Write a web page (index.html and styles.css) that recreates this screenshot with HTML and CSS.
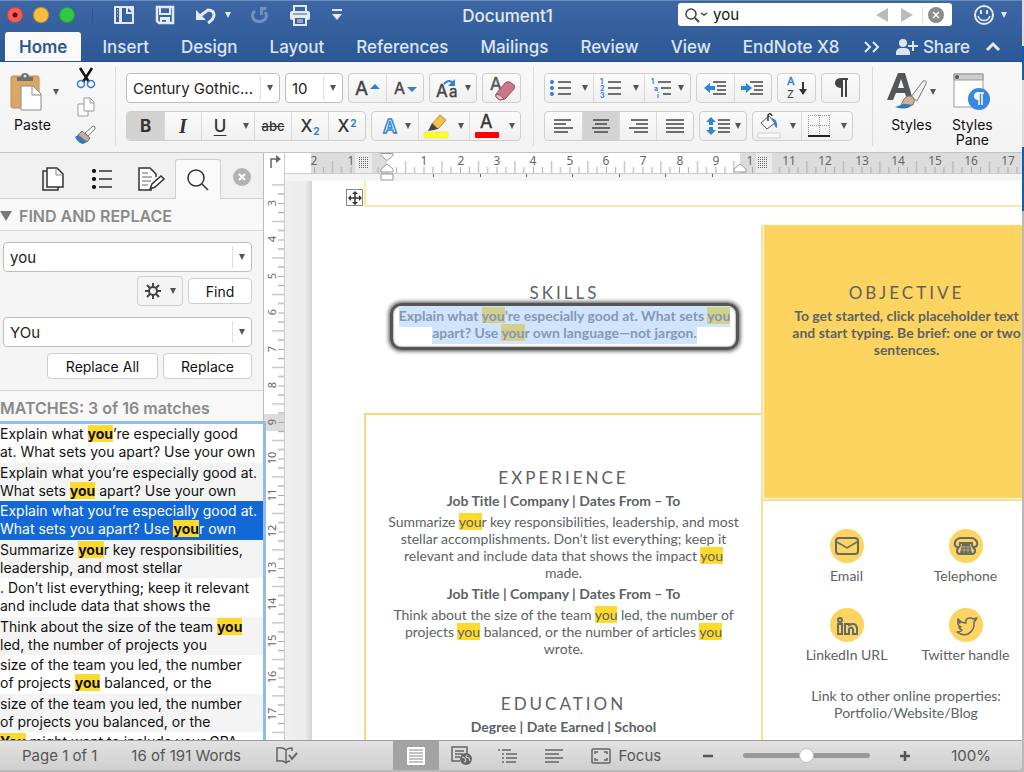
FILE: index.html
```
<!DOCTYPE html>
<html lang="en">
<head>
  <meta charset="UTF-8" />
  <meta name="viewport" content="width=device-width, initial-scale=1.0"/>
  <title>Document1</title>
  <link rel="stylesheet" href="styles.css">
</head>
<body>
<div class="window">

  <header class="chrome">
    <div class="titlebar">
      <div class="lights">
        <button class="light red" aria-label="Close"></button>
        <button class="light amber" aria-label="Minimize"></button>
        <button class="light green" aria-label="Zoom"></button>
      </div>
      <div class="quick">
        <button aria-label="Sidebar"><svg width="22" height="20" viewBox="0 0 22 20"><rect x="1" y="1" width="20" height="18" rx="1" fill="#e4eaf5"/><path d="M3 3h3v14H3z" fill="#3a619f"/><path d="M4 5h1M4 8h1M4 11h1" stroke="#e4eaf5"/><path d="M9 3h6l4 4v10H9z" fill="#3a619f"/><path d="M14 3v5h5" fill="none" stroke="#e4eaf5" stroke-width="2"/></svg></button>
        <button aria-label="Save"><svg width="20" height="20" viewBox="0 0 20 20"><path d="M2 2h16v16H4l-2-2z" fill="none" stroke="#e4eaf5" stroke-width="2.5"/><path d="M5 2v7h10V2M6 19v-6h8v6" fill="none" stroke="#e4eaf5" stroke-width="2"/><path d="M6 13h8v2H6zM11 13h3v6h-3z" fill="#e4eaf5"/></svg></button>
        <button aria-label="Undo" class="undo"><svg width="22" height="18" viewBox="0 0 22 18"><path d="M5 10l8-6q6 0 6 5c0 4-3 6-6 8" fill="none" stroke="#e4eaf5" stroke-width="3"/><path d="M1 4v10h10z" fill="#e4eaf5"/></svg><i class="caret light-caret"></i></button>
        <button aria-label="Repeat"><svg width="18" height="18" viewBox="0 0 18 18"><path d="M4 5a7 6 0 1 0 10 1" fill="none" stroke="#7391c0" stroke-width="3"/><path d="M9 1h7l-1 3h-3v5H9z" fill="#7391c0"/></svg></button>
        <button aria-label="Print"><svg width="22" height="22" viewBox="0 0 22 22"><path d="M5 7V2h12v5" fill="none" stroke="#e4eaf5" stroke-width="2"/><rect x="1" y="7" width="20" height="9" rx="2" fill="#e4eaf5"/><path d="M4 10h14" stroke="#3a619f"/><path d="M5 13h12v8H5z" fill="#3a619f" stroke="#e4eaf5" stroke-width="2"/><path d="M8 16h6M8 18h6" stroke="#e4eaf5"/></svg></button>
        <button aria-label="Customize"><svg width="12" height="12" viewBox="0 0 12 12"><path d="M1 1h10" stroke="#e4eaf5" stroke-width="2"/><path d="M1 5h10L6 11z" fill="#e4eaf5"/></svg></button>
      </div>
      <h1 class="doc-title">Document1</h1>
      <div class="search">
        <svg width="24" height="16" viewBox="0 0 24 16"><circle cx="7" cy="7" r="5" fill="none" stroke="#444" stroke-width="1.5"/><path d="M11 11l4 4" stroke="#444" stroke-width="2"/><path d="M17 6l3 2 3-2" fill="none" stroke="#444" stroke-width="1.5"/></svg>
        <input type="text" value="you" aria-label="Search in document">
        <button aria-label="Previous match"><svg width="12" height="14" viewBox="0 0 12 14"><path d="M12 0v14L0 7z" fill="#bbb"/></svg></button>
        <button aria-label="Next match"><svg width="12" height="14" viewBox="0 0 12 14"><path d="M0 0v14l12-7z" fill="#bbb"/></svg></button>
        <button aria-label="Clear search" class="clear"><svg width="16" height="16" viewBox="0 0 16 16"><circle cx="8" cy="8" r="8" fill="#8c8c8c"/><path d="M5 5l6 6M11 5l-6 6" stroke="#fff" stroke-width="1.5"/></svg></button>
      </div>
      <button class="feedback" aria-label="Feedback"><svg width="22" height="22" viewBox="0 0 22 22"><circle cx="11" cy="11" r="9" fill="none" stroke="#e4eaf5" stroke-width="2"/><path d="M8 6v4M14 6v4" stroke="#e4eaf5" stroke-width="2"/><path d="M5 12c2 6 10 6 12 0" fill="none" stroke="#e4eaf5" stroke-width="1.5"/></svg><i class="caret light-caret"></i></button>
    </div>
    <nav class="tabs">
      <a href="#" class="active">Home</a>
      <a href="#">Insert</a>
      <a href="#">Design</a>
      <a href="#">Layout</a>
      <a href="#">References</a>
      <a href="#">Mailings</a>
      <a href="#">Review</a>
      <a href="#">View</a>
      <a href="#">EndNote X8</a>
      <div class="tab-tools">
        <button aria-label="More tabs"><svg width="16" height="14" viewBox="0 0 16 14"><path d="M1 2l5 5-5 5M9 2l5 5-5 5" fill="none" stroke="#e4eaf5" stroke-width="2"/></svg></button>
        <button class="share"><svg width="22" height="16" viewBox="0 0 22 16"><circle cx="7" cy="4" r="4" fill="#dde5f2"/><path d="M0 16v-3q1-4 5-4h4q4 0 5 4v3z" fill="#dde5f2"/><path d="M17 2v10M12 7h10" stroke="#dde5f2" stroke-width="2"/></svg>Share</button>
        <button aria-label="Collapse ribbon"><svg width="14" height="9" viewBox="0 0 14 9"><path d="M1 8l6-6 6 6" fill="none" stroke="#e4eaf5" stroke-width="3"/></svg></button>
      </div>
    </nav>
  </header>

  <section class="ribbon">
    <div class="clipboard">
      <button class="big">
        <span class="pic"><svg width="32" height="40" viewBox="0 0 32 40"><rect x="1" y="4" width="28" height="32" rx="2" fill="#dba765" stroke="#c08c4c"/><path d="M7 9V5h4q0-4 4-4t4 4h4v4z" fill="#6d6f72"/><circle cx="15" cy="4" r="1.5" fill="#ddd"/><path d="M11 14h12l8 8v16H11z" fill="#fff" stroke="#8a8a8a"/><path d="M22 14v9h9" fill="none" stroke="#8a8a8a"/></svg><i class="caret"></i></span>
        <span class="label">Paste</span>
      </button>
      <div class="clip-tools">
        <button aria-label="Cut"><svg width="20" height="22" viewBox="0 0 20 22"><path d="M4 1l9 14M16 1L7 15" stroke="#111" stroke-width="2.5"/><circle cx="5" cy="17" r="3.5" fill="none" stroke="#2f7fd2" stroke-width="1.5"/><circle cx="15" cy="17" r="3.5" fill="none" stroke="#2f7fd2" stroke-width="1.5"/></svg></button>
        <button aria-label="Copy"><svg width="20" height="20" viewBox="0 0 20 20"><path d="M2 7h6l4 4v8H2z" fill="#fff" stroke="#999"/><path d="M8 1h6l4 4v9H8z" fill="#fff" stroke="#999"/><path d="M14 1v5h4" fill="none" stroke="#999"/></svg></button>
        <button aria-label="Format Painter"><svg width="22" height="20" viewBox="0 0 22 20"><path d="M10 8l8-7q3 0 2 3l-7 7z" fill="#f4f4f4" stroke="#777"/><path d="M7 6l8 7-3 4-9-7z" fill="#c9ac93" stroke="#777"/><path d="M3 10l9 7-4 2q-5-1-8-7z" fill="#3478bd"/></svg></button>
      </div>
    </div>

    <div class="group">
      <div class="row">
        <label class="combo font-name"><select aria-label="Font"><option>Century Gothic...</option></select></label>
        <label class="combo font-size"><select aria-label="Font size"><option>10</option></select></label>
        <div class="seg">
          <button class="w37" aria-label="Grow font"><svg width="28" height="20" viewBox="0 0 28 20"><text x="1" y="17" font-size="19" fill="#444" stroke="#444" stroke-width=".4">A</text><path d="M16 11h10l-5-5z" fill="#2f7fd2"/></svg></button>
          <button class="w37" aria-label="Shrink font"><svg width="28" height="20" viewBox="0 0 28 20"><text x="3" y="16" font-size="16" fill="#444" stroke="#444" stroke-width=".4">A</text><path d="M16 9h10l-5 5z" fill="#2f7fd2"/></svg></button>
        </div>
        <div class="seg">
          <button class="w46" aria-label="Change case"><svg width="24" height="22" viewBox="0 0 24 22"><text x="0" y="20" font-size="17" fill="#444" stroke="#444" stroke-width=".4">A</text><text x="13" y="20" font-size="15" fill="#444" stroke="#444" stroke-width=".4">a</text><path d="M8 7q5-6 10 0" fill="none" stroke="#2f7fd2" stroke-width="2"/><path d="M19 2v7h-7z" fill="#2f7fd2"/></svg><i class="caret"></i></button>
        </div>
        <div class="seg">
          <button class="w37" aria-label="Clear formatting"><svg width="28" height="26" viewBox="0 0 28 26"><text x="2" y="15" font-size="17" fill="#555" stroke="#555" stroke-width=".5">A</text><path d="M8 19l9-11q2-2 5-1l4 3q1 2 0 4l-9 10-5 1-4-3z" fill="#c87888" stroke="#985060"/><path d="M8 19q5 0 8 5l-4 1-4-3z" fill="#eac0c8" stroke="#985060"/></svg></button>
        </div>
      </div>
      <div class="row">
        <div class="seg">
          <button class="w37 on glyph" aria-pressed="true"><b>B</b></button>
          <button class="w37 glyph"><em>I</em></button>
          <button class="w37 glyph"><u>U</u></button>
          <button class="w16 split" aria-label="Underline style"><i class="caret"></i></button>
          <button class="w37 glyph small"><s>abc</s></button>
          <button class="w37 glyph">X<sub>2</sub></button>
          <button class="w37 glyph">X<sup>2</sup></button>
        </div>
        <div class="seg">
          <button class="w46" aria-label="Text effects"><svg width="20" height="20" viewBox="0 0 20 20"><text x="3" y="17" font-size="19" font-weight="600" fill="#fff" stroke="#2f86d8" stroke-width="1.5">A</text></svg><i class="caret"></i></button>
          <button class="w35" aria-label="Highlight"><svg width="24" height="26" viewBox="0 0 24 26"><path d="M8 11l8-9 6 5-8 9z" fill="#f3bf4e" stroke="#b98a2e"/><path d="M8 10l6 6-4 1-6 1z" fill="#444"/><rect x="0" y="19" width="24" height="6" rx="1" fill="#ffff29" stroke="#d8d820" stroke-width=".5"/></svg></button>
          <button class="w16 split" aria-label="Highlight color"><i class="caret"></i></button>
          <button class="w35" aria-label="Font color"><svg width="24" height="26" viewBox="0 0 24 26"><text x="5" y="15" font-size="18" fill="#333" stroke="#333" stroke-width=".4">A</text><rect x="0" y="19" width="24" height="6" rx="1" fill="#fb0007"/></svg></button>
          <button class="w16 split" aria-label="Font color list"><i class="caret"></i></button>
        </div>
      </div>
    </div>

    <div class="group">
      <div class="row">
        <div class="seg">
          <button class="w32" aria-label="Bullets"><svg width="22" height="18" viewBox="0 0 22 18"><circle cx="2" cy="3" r="2" fill="#2f7fd2"/><circle cx="2" cy="9" r="2" fill="#2f7fd2"/><circle cx="2" cy="15" r="2" fill="#2f7fd2"/><path d="M8 3h13M8 9h13M8 15h13" stroke="#444" stroke-width="1.5"/></svg></button>
          <button class="w16 split" aria-label="Bullet styles"><i class="caret"></i></button>
          <button class="w35" aria-label="Numbering"><svg width="22" height="20" viewBox="0 0 22 20"><g font-size="7" font-weight="700" fill="#2f7fd2"><text x="0" y="6">1</text><text x="0" y="13">2</text><text x="0" y="20">3</text></g><path d="M8 4h13M8 10h13M8 16h13" stroke="#444" stroke-width="1.5"/></svg></button>
          <button class="w16 split" aria-label="Number styles"><i class="caret"></i></button>
          <button class="w46" aria-label="Multilevel list"><svg width="22" height="20" viewBox="0 0 22 20"><g font-size="7" font-weight="700" fill="#2f7fd2"><text x="0" y="6">1</text><text x="3" y="13">a</text><text x="6" y="20">i</text></g><path d="M7 4h13M10 10h10M12 16h8" stroke="#444" stroke-width="1.5"/></svg><i class="caret"></i></button>
        </div>
        <div class="seg">
          <button class="w37" aria-label="Decrease indent"><svg width="24" height="16" viewBox="0 0 24 16"><path d="M0 8l6-5v3h5v4H6v3z" fill="#2f86d8"/><path d="M9 2h13M13 6h9M13 10h9M9 14h13" stroke="#444" stroke-width="1.5"/></svg></button>
          <button class="w37" aria-label="Increase indent"><svg width="24" height="16" viewBox="0 0 24 16"><path d="M11 8L5 3v3H0v4h5v3z" fill="#2f86d8"/><path d="M9 2h13M13 6h9M13 10h9M9 14h13" stroke="#444" stroke-width="1.5"/></svg></button>
        </div>
        <div class="seg">
          <button class="w37" aria-label="Sort"><svg width="24" height="24" viewBox="0 0 24 24"><text x="2" y="9" font-size="11" fill="#2f7fd2" stroke="#2f7fd2" stroke-width=".4">A</text><text x="2" y="22" font-size="11" fill="#444">Z</text><path d="M18 6v9" stroke="#333" stroke-width="2"/><path d="M14 13l4 6 4-6z" fill="#333"/></svg></button>
        </div>
        <div class="seg">
          <button class="w37" aria-label="Show formatting marks"><svg width="16" height="20" viewBox="0 0 16 20"><path d="M8 1h7M9 1v18M13 1v18" stroke="#444" stroke-width="2"/><path d="M9 0q-7 0-7 5t7 5z" fill="#444"/></svg></button>
        </div>
      </div>
      <div class="row">
        <div class="seg">
          <button class="w37" aria-label="Align left"><svg width="20" height="14" viewBox="0 0 20 14"><path d="M0 1h17M0 5h12M0 9h19M0 13h14" stroke="#444" stroke-width="1.5"/></svg></button>
          <button class="w37 on" aria-label="Center" aria-pressed="true"><svg width="20" height="14" viewBox="0 0 20 14"><path d="M2 1h16M4 5h12M1 9h18M3 13h14" stroke="#444" stroke-width="1.5"/></svg></button>
          <button class="w37" aria-label="Align right"><svg width="20" height="14" viewBox="0 0 20 14"><path d="M3 1h17M8 5h12M1 9h19M6 13h14" stroke="#444" stroke-width="1.5"/></svg></button>
          <button class="w37" aria-label="Justify"><svg width="20" height="14" viewBox="0 0 20 14"><path d="M1 1h18M1 5h18M1 9h18M1 13h18" stroke="#444" stroke-width="1.5"/></svg></button>
        </div>
        <div class="seg">
          <button class="w46" aria-label="Line spacing"><svg width="24" height="20" viewBox="0 0 24 20"><path d="M0 6l5-5 5 5H7v3H3V6zM0 14l5 5 5-5H7v-3H3v3z" fill="#2f86d8"/><path d="M12 4h12M12 8h12M12 12h12M12 16h12" stroke="#444" stroke-width="1.5"/></svg><i class="caret"></i></button>
        </div>
        <div class="seg">
          <button class="w32" aria-label="Shading"><svg width="24" height="26" viewBox="0 0 24 26"><path d="M4 10l8-7 6 7-8 6z" fill="#fff" stroke="#555"/><path d="M11 8V2q2-3 4 1" fill="none" stroke="#333" stroke-width="1.5"/><path d="M14 5q7 0 6 10-3-1-3-6z" fill="#2f86d8"/><rect x="1" y="20" width="22" height="5" rx="1" fill="#fafafa" stroke="#ccc"/></svg></button>
          <button class="w16 split" aria-label="Shading color"><i class="caret"></i></button>
          <button class="w35" aria-label="Borders"><svg width="22" height="22" viewBox="0 0 22 22"><path d="M0 .5h22M.5 0v20M21.5 0v20M11.5 0v20M0 10.5h22" fill="none" stroke="#999" stroke-dasharray="1 1"/><path d="M0 21h22" stroke="#222" stroke-width="2"/></svg></button>
          <button class="w16 split" aria-label="Border styles"><i class="caret"></i></button>
        </div>
      </div>
    </div>

    <div class="styles-group">
      <button class="big">
        <span class="pic"><svg width="40" height="40" viewBox="0 0 40 40"><path d="M0 28L11 1h7l8 27h-6l-2-7H9l-3 7zM11 16h6L14 7z" fill="#55565a"/><path d="M24 25L36 9q4-1 3 3L30 29z" fill="#f2f2f2" stroke="#777"/><path d="M17 27q4-5 9-2 3 3 0 8H14z" fill="#cdb299" stroke="#777"/><path d="M8 35l9-3 8 1q-5 6-17 2z" fill="#2f78bd"/></svg><i class="caret"></i></span>
        Styles
      </button>
      <button class="big pane">
        <span class="pic"><svg width="38" height="40" viewBox="0 0 38 40"><rect x="1" y="2" width="29" height="33" fill="#fff" stroke="#999"/><path d="M1 2h29v6H1z" fill="#ccc" stroke="#999"/><circle cx="4" cy="5" r="2" fill="#555"/><circle cx="26" cy="27" r="11" fill="#3589e0"/><path d="M25 21h6M26 21v12M29 21v12" stroke="#fff" stroke-width="1.5"/><path d="M26 20q-5 0-5 4t5 4z" fill="#fff"/></svg></span>
        Styles<br>Pane
      </button>
    </div>
  </section>

  <main class="workspace">
    <aside class="sidebar">
      <div class="side-tabs">
        <button aria-label="Thumbnails"><svg width="24" height="26" viewBox="0 0 24 26"><path d="M6 5H2v19h15v-3" fill="none" stroke="#333" stroke-width="1.5"/><path d="M6 2h10l6 6v13H6z" fill="#fff" stroke="#333" stroke-width="1.5"/><path d="M15 2v7h7" fill="none" stroke="#888"/></svg></button>
        <button aria-label="Document map"><svg width="22" height="20" viewBox="0 0 22 20"><circle cx="3" cy="2" r="2"/><circle cx="3" cy="10" r="2"/><circle cx="3" cy="18" r="2"/><path d="M8 2h13M8 10h13M8 18h13" stroke="#333" stroke-width="1.5"/></svg></button>
        <button aria-label="Reviewing"><svg width="28" height="26" viewBox="0 0 28 26"><path d="M15 24H2V2h11l6 6v3" fill="#fff" stroke="#333" stroke-width="1.5"/><path d="M5 7h6M5 11h10M5 15h9M5 19h6" stroke="#999" stroke-width="1.5"/><path d="M13 23l2-5 9-8 3 3-9 8z" fill="#fff" stroke="#333" stroke-width="1.5"/></svg></button>
        <button aria-label="Find" class="active"><svg width="22" height="22" viewBox="0 0 22 22"><circle cx="9" cy="9" r="8" fill="none" stroke="#333" stroke-width="1.5"/><path d="M15 15l6 6" stroke="#333" stroke-width="1.5"/></svg></button>
        <button aria-label="Close sidebar"><svg width="18" height="18" viewBox="0 0 18 18"><circle cx="9" cy="9" r="9" fill="#b3b3b3"/><path d="M6 6l6 6M12 6l-6 6" stroke="#fff" stroke-width="2"/></svg></button>
      </div>
      <h2 class="side-head"><svg width="12" height="12" viewBox="0 0 12 12"><path d="M0 1h12L6 11z" fill="#777"/></svg>FIND AND REPLACE</h2>
      <form class="find-form">
        <label class="combo"><select aria-label="Find text"><option>you</option></select></label>
        <div class="actions">
          <button type="button" class="gear" aria-label="Options"><svg width="16" height="16" viewBox="0 0 16 16"><path d="M8 0v16M0 8h16M2 2l12 12M14 2L2 14" stroke="#444" stroke-width="2"/><circle cx="8" cy="8" r="4" fill="#f4f4f4" stroke="#444" stroke-width="2"/></svg><i class="caret"></i></button>
          <button type="button" class="push find">Find</button>
        </div>
        <label class="combo"><select aria-label="Replace with"><option>YOu</option></select></label>
        <div class="actions">
          <button type="button" class="push all">Replace All</button>
          <button type="button" class="push one">Replace</button>
        </div>
      </form>
      <h2 class="side-head matches-head">MATCHES: 3 of 16 matches</h2>
      <ul class="matches">
        <li>Explain what <mark>you</mark>’re especially good<br>at. What sets you apart? Use your own</li>
        <li>Explain what you’re especially good at.<br>What sets <mark>you</mark> apart? Use your own</li>
        <li class="selected">Explain what you’re especially good at.<br>What sets you apart? Use <mark>you</mark>r own</li>
        <li>Summarize <mark>you</mark>r key responsibilities,<br>leadership, and most stellar</li>
        <li>. Don’t list everything; keep it relevant<br>and include data that shows the</li>
        <li>Think about the size of the team <mark>you</mark><br>led, the number of projects you</li>
        <li>size of the team you led, the number<br>of projects <mark>you</mark> balanced, or the</li>
        <li>size of the team you led, the number<br>of projects you balanced, or the</li>
        <li><mark>You</mark> might want to include your GPA</li>
      </ul>
    </aside>

    <div class="ruler-v">
      <svg width="21" height="20" viewBox="0 0 21 20"><path d="M7 15V6h6" fill="none" stroke="#666" stroke-width="1.5"/><path d="M12 2l5 4-5 4z" fill="#666"/></svg>
      <svg class="scale" width="21" height="567" viewBox="0 173 21 567">
        <defs><pattern id="vt" x="0" y="203" width="21" height="36.5" patternUnits="userSpaceOnUse"><path d="M14 0.5h6M14 9.5h6M8 18.5h12M14 27.5h6" stroke="#aaa"/></pattern></defs>
        <path d="M0 414h20v17H0z" fill="#dcdcdc"/>
        <path d="M0 181h20v559H0z" fill="url(#vt)"/>
        <g class="nums">
          <text transform="translate(12 203) rotate(-90)">3</text><text transform="translate(12 239) rotate(-90)">4</text><text transform="translate(12 276) rotate(-90)">5</text><text transform="translate(12 312) rotate(-90)">6</text><text transform="translate(12 349) rotate(-90)">7</text><text transform="translate(12 385) rotate(-90)">8</text><text transform="translate(12 422) rotate(-90)">9</text><text transform="translate(12 458) rotate(-90)">10</text><text transform="translate(12 495) rotate(-90)">11</text><text transform="translate(12 531) rotate(-90)">12</text><text transform="translate(12 568) rotate(-90)">13</text><text transform="translate(12 604) rotate(-90)">14</text><text transform="translate(12 641) rotate(-90)">15</text><text transform="translate(12 677) rotate(-90)">16</text><text transform="translate(12 714) rotate(-90)">17</text>
        </g>
      </svg>
    </div>

    <div class="editor">
      <div class="ruler-h">
        <svg width="740" height="28" viewBox="285 153 740 28">
          <defs><pattern id="ht" x="387" y="153" width="36.5" height="20" patternUnits="userSpaceOnUse"><path d="M0.5 14v6M9.5 14v6M18.5 8v12M27.5 14v6" stroke="#aaa"/></pattern></defs>
          <path d="M285 153h740v20H285z" fill="#fff"/>
          <path d="M311 153h76v20h-76zM740 153h285v20H740z" fill="#dcdcdc"/>
          <path d="M312 153h713v20H312z" fill="url(#ht)"/>
          <path d="M285 173h740v8H285z" fill="#f4f4f4"/><path d="M285 173.5h740" stroke="#ccc"/>
          <path d="M355 153h17v20h-17zM756 153h16v20h-16z" fill="#ececec"/>
          <path d="M359.5 157v12M361.5 157v12M363.5 157v12M365.5 157v12M367.5 157v12M758.5 157v12M760.5 157v12M762.5 157v12M764.5 157v12M766.5 157v12" stroke="#666" stroke-dasharray="1 1"/>
          <path d="M433.5 174v3M480.5 174v3M526.5 174v3M572.5 174v3M619.5 174v3M665.5 174v3M712.5 174v3" stroke="#666"/>
          <path d="M381 153.5h12v2l-6 5-6-5zM381 172v-3l6-5 6 5v3zM381 174h12v6h-12zM734 172v-3l6-5 6 5v3z" fill="#fff" stroke="#999"/>
          <g class="nums">
            <text x="314" y="165">2</text><text x="351" y="165">1</text><text x="424" y="165">1</text><text x="461" y="165">2</text><text x="497" y="165">3</text><text x="533" y="165">4</text><text x="570" y="165">5</text><text x="606" y="165">6</text><text x="643" y="165">7</text><text x="680" y="165">8</text><text x="716" y="165">9</text><text x="750" y="165">1</text><text x="789" y="165">11</text><text x="825" y="165">12</text><text x="862" y="165">13</text><text x="898" y="165">14</text><text x="935" y="165">15</text><text x="971" y="165">16</text><text x="1008" y="165">17</text>
          </g>
        </svg>
      </div>
      <div class="canvas">
        <article class="page">
          <button class="handle" aria-label="Move table"><svg width="14" height="14" viewBox="0 0 14 14"><path d="M7 2v10M2 7h10" stroke="#333" stroke-width="1.5"/><path d="M7 0l3 3H4zM7 14l3-3H4zM0 7l3-3v6zM14 7l-3-3v6z" fill="#333"/></svg></button>
          <div class="banner"></div>
          <div class="columns">
            <div class="col-main">
              <section class="skills">
                <h3>SKILLS</h3>
                <p class="callout"><span>Explain what <mark>you</mark>’re especially good at. What sets <mark>you</mark></span><br><span>apart? Use <mark>you</mark>r own language—not jargon.</span></p>
              </section>
              <section class="experience">
                <h3>EXPERIENCE</h3>
                <h4>Job Title | Company | Dates From – To</h4>
                <p>Summarize <mark>you</mark>r key responsibilities, leadership, and most<br>stellar accomplishments. Don’t list everything; keep it<br>relevant and include data that shows the impact <mark>you</mark><br>made.</p>
                <h4>Job Title | Company | Dates From – To</h4>
                <p>Think about the size of the team <mark>you</mark> led, the number of<br>projects <mark>you</mark> balanced, or the number of articles <mark>you</mark><br>wrote.</p>
                <h3 class="next">EDUCATION</h3>
                <h4>Degree | Date Earned | School</h4>
              </section>
            </div>
            <div class="col-side">
              <section class="objective">
                <h3>OBJECTIVE</h3>
                <p>To get started, click placeholder text<br>and start typing. Be brief: one or two<br>sentences.</p>
              </section>
              <section class="contacts">
                <div class="contact"><svg width="34" height="34" viewBox="0 0 34 34"><circle cx="17" cy="17" r="17" fill="#fdd45f"/><rect x="6" y="9" width="22" height="16" rx="3" fill="none" stroke="#636a6b" stroke-width="2"/><path d="M7 13l10 6 10-6" fill="none" stroke="#636a6b" stroke-width="1.5"/></svg>Email</div>
                <div class="contact"><svg width="34" height="34" viewBox="0 0 34 34"><circle cx="17" cy="17" r="17" fill="#fdd45f"/><path d="M10 18H8q-3-1-2-5 2-4 6-4h10q4 0 6 4 1 4-2 5h-2q-1 0-1-4H11q0 4-1 4zM10 18q-2 2-2 4 0 3 3 3h12q3 0 3-3 0-2-2-4" fill="none" stroke="#636a6b" stroke-width="2"/><path d="M13 15h8l2 9H11z" fill="#636a6b"/><path d="M12 18h10M12 21h10M15 17v7M19 17v7" stroke="#fdd45f" stroke-width=".5"/></svg>Telephone</div>
                <div class="contact"><svg width="34" height="34" viewBox="0 0 34 34"><circle cx="17" cy="17" r="17" fill="#fdd45f"/><circle cx="10" cy="12" r="2" fill="none" stroke="#636a6b" stroke-width="2"/><path d="M8 16h4v10H8zM15 16h4v1q7-3 8 3v6h-4v-5q-2-3-4 0v5h-4z" fill="none" stroke="#636a6b" stroke-width="2"/></svg>LinkedIn URL</div>
                <div class="contact"><svg width="34" height="34" viewBox="0 0 34 34"><circle cx="17" cy="17" r="17" fill="#fdd45f"/><path d="M9 11q3 4 8 4-1-5 4-5 2 0 3 1l4-1-3 4q1 8-6 12-6 2-11-2 4 0 5-2-3-1-3-3h2q-4-2-3-5l2 1q-3-2-2-4z" fill="none" stroke="#636a6b" stroke-width="1.5" stroke-linejoin="round"/></svg>Twitter handle</div>
              </section>
              <p class="links">Link to other online properties:<br>Portfolio/Website/Blog</p>
            </div>
          </div>
        </article>
      </div>
    </div>
  </main>

  <footer class="status">
    <span class="pages">Page 1 of 1</span>
    <span class="words">16 of 191 Words</span>
    <button class="proof" aria-label="Proofing"><svg width="22" height="18" viewBox="0 0 22 18"><path d="M10 3Q7 0 1 1v13q6-1 9 2 2-2 4-2M10 3v13M10 3q2-2 6-2v3" fill="none" stroke="#666" stroke-width="1.5"/><path d="M13 8l3 4 5-6" fill="none" stroke="#666" stroke-width="2"/></svg></button>
    <div class="views">
      <button class="on" aria-label="Print layout"><svg width="20" height="18" viewBox="0 0 20 18"><rect x="1" y="0" width="18" height="18" rx="1" fill="#fff"/><path d="M3 3h14M3 6h14M3 9h14M3 12h14M3 15h14" stroke="#888"/></svg></button>
      <button aria-label="Web layout"><svg width="22" height="20" viewBox="0 0 22 20"><path d="M9 15H1V1h15v7" fill="none" stroke="#666" stroke-width="1.5"/><path d="M4 5h9M4 8h8M4 11h5" stroke="#666" stroke-width="1.5"/><circle cx="15" cy="13" r="6" fill="#666"/><path d="M11 11l3 1 1 3-2 1M16 9l-1 2 3 1 1 3" fill="none" stroke="#ddd"/></svg></button>
      <button aria-label="Outline"><svg width="20" height="14" viewBox="0 0 20 14"><path d="M0 1h2M4 1h9M4 5h2M8 5h11M4 9h2M8 9h11M4 13h2M8 13h10" stroke="#666" stroke-width="1.5"/></svg></button>
      <button aria-label="Draft"><svg width="18" height="14" viewBox="0 0 18 14"><path d="M0 1h18M0 5h14M0 9h18M0 13h14" stroke="#666" stroke-width="1.5"/></svg></button>
    </div>
    <button class="focus"><svg width="20" height="16" viewBox="0 0 20 16"><rect x="1" y="1" width="18" height="14" rx="1" fill="none" stroke="#666" stroke-width="1.5"/><path d="M4 6V4h3M13 4h3v2M16 10v2h-3M7 12H4v-2" fill="none" stroke="#666" stroke-width="1.5"/></svg>Focus</button>
    <div class="zoom">
      <button aria-label="Zoom out"><svg width="12" height="12" viewBox="0 0 12 12"><path d="M1 6h10" stroke="#555" stroke-width="2.5"/></svg></button>
      <input type="range" min="0" max="100" value="50" aria-label="Zoom">
      <button aria-label="Zoom in"><svg width="12" height="12" viewBox="0 0 12 12"><path d="M1 6h10M6 1v10" stroke="#555" stroke-width="2.5"/></svg></button>
      <span>100%</span>
    </div>
  </footer>
</div>
</body>
</html>
```
FILE: styles.css
```
* {
  box-sizing: border-box;
}

body {
  margin: 0;
  height: 100vh;
  overflow: hidden;
  font-family: Inter, "Liberation Sans", sans-serif;
  font-size: 14px;
  color: #111;
  padding: 0 2px 2px 0;
  background: linear-gradient(#dcdcdc 46px, #1160ae 46px, #1160ae 80px, #dcdcdc 80px, #dcdcdc 147px, #1160ae 147px, #1160ae 211px, #b9b9b9 211px);
}

h1, h2, h3, h4, p, ul {
  margin: 0;
  padding: 0;
  font-weight: normal;
}

button, input, select {
  font: inherit;
  color: inherit;
  border: 0;
  padding: 0;
  margin: 0;
  background: none;
}

button {
  display: flex;
  align-items: center;
  justify-content: center;
}

svg {
  display: block;
  flex: none;
  overflow: visible;
}

svg text {
  font-family: Inter, sans-serif;
}

.window {
  height: 100%;
  display: flex;
  flex-direction: column;
  background: #f5f5f5;
  overflow: hidden;
  border-radius: 0 0 5px 0;
}

/* small down arrow used by every menu button */
.caret {
  flex: none;
  border: 3px solid transparent;
  border-top: 6px solid #555;
  border-bottom: 0;
}

.light-caret {
  border-top-color: #e4eaf5;
}

/* ---- title bar and tabs ---- */
.chrome {
  flex: none;
  background: linear-gradient(#3d66a4, #2c5896);
  border-top: 1px solid #6b8bbb;
  border-bottom: 1px solid #24508f;
  color: #e4eaf5;
}

.titlebar {
  height: 31px;
  display: flex;
  align-items: center;
  padding: 0 15px 4px 7px;
}

.lights {
  display: flex;
  gap: 10px;
  padding-right: 17px;
  border-right: 1px solid #31578f;
}

.light {
  width: 16px;
  height: 16px;
  border-radius: 50%;
  border: 1px solid #0003;
}

.red {
  background: radial-gradient(#5b0b0b 2px, #fc5b57 3px);
}

.amber {
  background: #fdbc40;
}

.green {
  background: #33c748;
}

.quick {
  display: flex;
  align-items: center;
  gap: 20px;
  margin-left: 20px;
}

.undo {
  gap: 8px;
}

.doc-title {
  flex: 1;
  text-align: center;
  font-size: 17px;
  font-weight: 500;
  padding: 3px 6px 0 0;
}

.search {
  width: 274px;
  height: 23px;
  display: flex;
  align-items: center;
  gap: 13px;
  padding: 0 8px 0 6px;
  border-radius: 3px;
  background: #fff;
  color: #111;
}

.search input {
  flex: 1;
  width: 0;
  font-size: 15px;
  margin-left: -8px;
}

.search .clear {
  padding-left: 5px;
  border-left: 1px solid #ddd;
  margin-left: -4px;
}

.feedback {
  gap: 6px;
  margin-left: 21px;
}

.tabs {
  height: 29px;
  display: flex;
  align-items: stretch;
  padding-left: 5px;
}

.tabs a {
  display: flex;
  align-items: center;
  padding: 0 16px;
  font-size: 17px;
  font-weight: 500;
  color: #dde5f2;
  text-decoration: none;
  white-space: nowrap;
}

.tabs a.active {
  background: #fafafa;
  color: #2b5797;
  font-weight: 600;
  padding: 0 14px;
  border-radius: 3px 3px 0 0;
  margin-right: 5px;
}

.tab-tools {
  flex: 1;
  display: flex;
  align-items: center;
  justify-content: flex-end;
  gap: 16px;
  padding-right: 22px;
  font-size: 17px;
  font-weight: 500;
}

.share {
  gap: 5px;
  color: #dde5f2;
}

/* ---- ribbon ---- */
.ribbon {
  flex: none;
  height: 91px;
  display: flex;
  padding-top: 5px;
  border-bottom: 1px solid #c4c4c4;
  background: linear-gradient(#f8f8f8, #f3f3f3);
}

.clipboard {
  width: 115px;
  display: flex;
  gap: 16px;
  padding-left: 10px;
}

.big {
  flex-direction: column;
  justify-content: flex-start;
  font-size: 14px;
  line-height: 15px;
  align-self: flex-start;
  padding-top: 4px;
}

.big .pic {
  display: flex;
  align-items: center;
  gap: 3px;
  height: 42px;
  margin-bottom: 4px;
}

.clipboard .pic {
  gap: 11px;
}

.clipboard .big {
  align-items: flex-start;
}

.clipboard .label {
  padding-left: 4px;
}

.clip-tools {
  display: flex;
  flex-direction: column;
  align-items: center;
  gap: 8px;
}

.group {
  display: flex;
  flex-direction: column;
  gap: 8px;
  padding: 6px 12px 0 10px;
}

.group, .styles-group {
  border-left: 1px solid #dcdcdc;
  margin-bottom: 6px;
}

.row {
  display: flex;
  gap: 5px;
}

.seg {
  display: flex;
  height: 30px;
  border: 1px solid #cfcfcf;
  border-radius: 4px;
  background: linear-gradient(#fbfbfb, #f0f0f0);
  overflow: hidden;
}

.seg button {
  border-left: 1px solid #d9d9d9;
  gap: 5px;
}

.seg button:first-child, .seg button.split {
  border-left: 0;
}

.seg button.on {
  background: #d3d3d3;
}

.w16 { width: 16px; }
.w32 { width: 32px; }
.w35 { width: 35px; }
.w37 { width: 37px; }
.w46 { width: 46px; }

.seg .glyph {
  gap: 1px;
  font-size: 17px;
  font-weight: 500;
  color: #333;
}

.glyph em {
  font-family: "Liberation Serif", serif;
  font-size: 20px;
  font-weight: bold;
}

.glyph u {
  text-underline-offset: 3px;
}

.seg .small {
  font-size: 13px;
}

.glyph sub, .glyph sup {
  font-size: 10px;
  font-weight: 700;
  line-height: 10px;
  color: #2f7fd2;
}

.glyph sub {
  align-self: flex-end;
  margin-bottom: 4px;
}

.glyph sup {
  align-self: flex-start;
  margin-top: 6px;
}

/* select and its arrow share one grid cell */
.combo {
  display: grid;
  align-items: center;
  height: 30px;
  border: 1px solid #bdbdbd;
  border-radius: 4px;
  background: #fff;
}

.combo select {
  grid-area: 1 / 1;
  appearance: none;
  width: 100%;
  height: 100%;
  padding: 0 18px 0 6px;
  font-size: 15px;
  color: #222;
}

.combo::after {
  content: "";
  grid-area: 1 / 1;
  justify-self: end;
  margin-right: 6px;
  border: 3px solid transparent;
  border-top: 6px solid #555;
  border-bottom: 0;
  pointer-events: none;
}

.combo::before {
  content: "";
  grid-area: 1 / 1;
  justify-self: end;
  width: 1px;
  height: 22px;
  margin-right: 18px;
  background: #ddd;
  z-index: 1;
}

.font-name {
  width: 154px;
}

.font-size {
  width: 58px;
}

.styles-group {
  flex: 1;
  display: flex;
  gap: 16px;
  padding-left: 14px;
}

.styles-group .big {
  align-items: center;
}

/* ---- workspace ---- */
.workspace {
  flex: 1;
  min-height: 0;
  display: flex;
  overflow: hidden;
}

.sidebar {
  width: 264px;
  flex: none;
  z-index: 1;
  border-right: 1px solid #bdbdbd;
  background: #f5f5f5;
}

.side-tabs {
  height: 46px;
  display: flex;
  align-items: flex-end;
  padding-left: 28px;
  background: #f0f0f0;
  box-shadow: inset 0 -1px #d0d0d0;
}

.side-tabs button {
  width: 49px;
  height: 40px;
}

.side-tabs .active {
  width: 46px;
  border: 1px solid #cfcfcf;
  border-bottom: 0;
  border-radius: 3px 3px 0 0;
  background: #fafafa;
}

.side-tabs button:last-child {
  width: 42px;
  padding-bottom: 4px;
}

.side-head {
  display: flex;
  align-items: center;
  gap: 7px;
  height: 32px;
  padding-top: 3px;
  border-bottom: 1px solid #d6d6d6;
  background: #f8f8f8;
  font-size: 16px;
  font-weight: 600;
  color: #8a8a8a;
}

.find-form {
  padding: 11px 11px 11px 3px;
}

.actions {
  display: flex;
  align-items: center;
  justify-content: flex-end;
  gap: 5px;
}

.find-form .combo + .actions {
  margin: 4px 0 11px;
}

.find-form .combo:nth-of-type(2) + .actions {
  margin: 6px 0 0;
}

.gear {
  width: 46px;
  height: 30px;
  gap: 9px;
  border: 1px solid #cfcfcf;
  border-radius: 4px;
  background: #f4f4f4;
}

.push {
  height: 26px;
  border: 1px solid #cdcdcd;
  border-radius: 4px;
  background: #fff;
}

.find { width: 64px; }
.all { width: 111px; }
.one { width: 89px; }

.matches-head {
  height: 31px;
  border-top: 1px solid #d6d6d6;
  border-bottom: 0;
}

.matches {
  list-style: none;
  margin-top: 3px;
  background: #fff;
  box-shadow: 0 0 0 3px #8fbdf0;
  line-height: 18px;
  white-space: nowrap;
}

.matches li {
  height: 39px;
  padding-top: 1px;
}

.matches li:nth-child(even) {
  height: 38px;
  background: #f4f4f4;
}

.matches .selected {
  background: #1168d6;
  color: #fff;
}

mark {
  background: #fed92e;
  color: inherit;
}

.matches mark {
  font-weight: 700;
  color: #111;
}

.ruler-v {
  width: 21px;
  flex: none;
  background: #fff;
  border-right: 1px solid #ccc;
}

.nums {
  font-size: 12px;
  fill: #666;
  text-anchor: middle;
}

.ruler-v .nums {
  font-size: 11px;
}

.nums text {
  font-family: "Noto Sans", sans-serif;
}

.editor {
  flex: 1;
  min-width: 0;
  display: flex;
  flex-direction: column;
  overflow: hidden;
}

.ruler-h {
  height: 28px;
  flex: none;
  overflow: hidden;
}

.canvas {
  flex: 1;
  min-height: 0;
  padding-left: 27px;
  overflow: hidden;
  background: linear-gradient(90deg, #f0f0f0, #ececec 20px, #d4d4d4 27px);
}

/* ---- document ---- */
.page {
  position: relative;
  min-height: 100%;
  padding-left: 52px;
  background: #fff;
  font-family: Lato, sans-serif;
  font-size: 14px;
  line-height: 17px;
  text-align: center;
  color: #5b6364;
}

.handle {
  position: absolute;
  left: 34px;
  top: 8px;
  width: 17px;
  height: 17px;
  border: 1px solid #888;
  background: #fff;
}

.banner {
  height: 26px;
  border: solid #fde7a5;
  border-width: 0 0 2px 2px;
}

.columns {
  display: grid;
  grid-template-columns: 397px 288px;
}

.page h3 {
  font-size: 17px;
  line-height: 20px;
  letter-spacing: 3px;
  margin-bottom: 4px;
}

.page h4 {
  font-size: 14px;
  line-height: 18px;
  font-weight: 700;
}

.skills {
  padding: 76px 0 63px 4px;
}

.skills h3 {
  margin-bottom: 0;
}

.callout {
  width: 349px;
  margin: 0 auto;
  border: 3px solid #555;
  border-radius: 11px;
  box-shadow: 0 0 4px 1px #444, inset 0 0 2px #333;
  padding: 1px 0 6px;
  font-weight: 700;
  color: #8499b3;
  white-space: nowrap;
}

.callout span {
  background: #d1e4fd;
  padding: 1px 0 3px;
}

.callout mark {
  background: #d3d08c;
}

.experience {
  border: solid #fbd878;
  border-width: 2px 0 0 2px;
  padding-top: 53px;
  height: 400px;
}

.experience h4 + p {
  margin: 3px 0 4px;
}

.page .next {
  margin-top: 37px;
}

.col-side {
  margin-top: 18px;
  border-left: 2px solid #fbdf90;
}

.objective {
  height: 273px;
  margin-left: 1px;
  padding-top: 58px;
  background: #fdd45f;
}

.objective p {
  font-weight: 700;
}

.contacts {
  margin-top: 1px;
  border-top: 2px solid #fbdf90;
  display: grid;
  grid-template-columns: 119px 119px;
  justify-content: center;
  row-gap: 20px;
  padding-top: 28px;
}

.contact {
  display: flex;
  flex-direction: column;
  align-items: center;
  gap: 4px;
  height: 59px;
}

.links {
  margin-top: 20px;
}

/* ---- status bar ---- */
.status {
  flex: none;
  height: 30px;
  display: flex;
  align-items: center;
  padding: 0 31px 0 22px;
  border-top: 1px solid #9d9d9d;
  background: linear-gradient(#e2e2e2, #cfcfcf);
  font-size: 15px;
  color: #555;
  white-space: nowrap;
}

.words {
  margin-left: 34px;
}

.proof {
  margin-left: 35px;
}

.views {
  display: flex;
  align-self: stretch;
  margin: 0 14px 0 auto;
}

.views button {
  width: 46px;
}

.views .on {
  background: #a3a3a3;
}

.focus {
  gap: 8px;
}

.zoom {
  display: flex;
  align-items: center;
  gap: 29px;
  margin-left: 41px;
}

.zoom span {
  margin-left: 11px;
}

.zoom input {
  appearance: none;
  width: 127px;
  height: 5px;
  border-radius: 3px;
  background: #999;
}

.zoom input::-webkit-slider-thumb {
  appearance: none;
  width: 15px;
  height: 15px;
  border-radius: 50%;
  border: 1px solid #bbb;
  background: #fff;
}
```
